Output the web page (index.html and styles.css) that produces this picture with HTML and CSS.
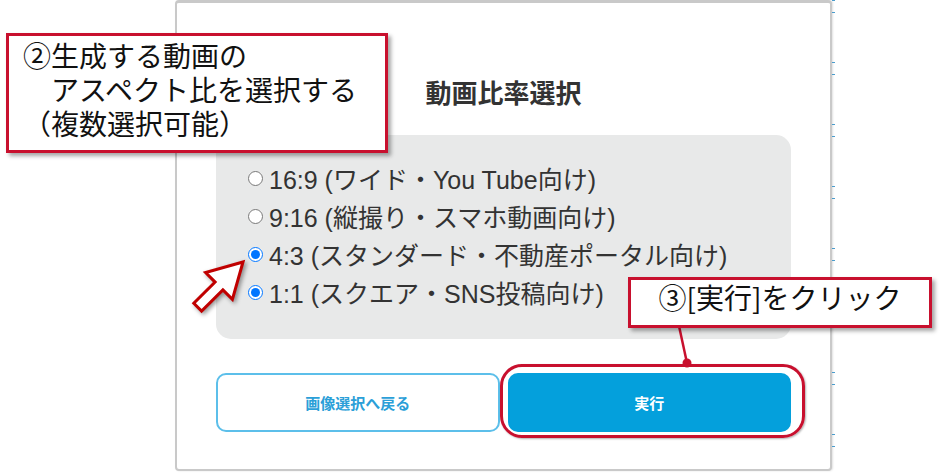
FILE: index.html
```html
<!DOCTYPE html>
<html>

<head>
    <title>動画比率選択</title>
    <link rel="stylesheet" href="styles.css">
</head>

<body>
    <div class="stage">
        <div class="modal">
            <h2 class="modal-title">動画比率選択</h2>
            <div class="ratio-box">
                <label class="ratio-item"><input type="radio" name="r169">16:9 (ワイド・You Tube向け)</label>
                <label class="ratio-item"><input type="radio" name="r916">9:16 (縦撮り・スマホ動画向け)</label>
                <label class="ratio-item"><input type="radio" name="r43" checked>4:3 (スタンダード・不動産ポータル向け)</label>
                <label class="ratio-item"><input type="radio" name="r11" checked>1:1 (スクエア・SNS投稿向け)</label>
            </div>
            <div class="modal-actions">
                <button class="btn btn-outline">画像選択へ戻る</button>
                <button class="btn btn-primary">実行</button>
            </div>
        </div>
        <div class="edge-ticks"></div>
    </div>

    <!-- annotations -->
    <div class="callout callout-select">
        <div class="callout-line">②生成する動画の</div>
        <div class="callout-line">　アスペクト比を選択する</div>
        <div class="callout-line">（複数選択可能）</div>
    </div>

    <svg class="pointer-arrow" width="75" height="75" viewBox="0 0 75 75">
        <polygon points="58,12 47.4,49.4 37.9,39.9 16.6,61.1 8.8,53.3 30.1,32.1 20.6,22.6"
            fill="#fff" stroke="#c00000" stroke-width="3" stroke-linejoin="miter" />
    </svg>

    <div class="click-ring"></div>
    <svg class="connector" width="30" height="50" viewBox="0 0 30 50">
        <line x1="9" y1="4" x2="17" y2="41" stroke="#c8102e" stroke-width="2.5" />
        <circle cx="17" cy="41" r="4.5" fill="#c8102e" />
    </svg>
    <div class="callout callout-run">③[実行]をクリック</div>
</body>

</html>
```

FILE: styles.css
```css
html,
body {
    margin: 0;
    padding: 0;
}

body {
    position: relative;
    width: 946px;
    height: 473px;
    overflow: hidden;
    background-color: #fff;
    font-family: "Liberation Sans", "Noto Sans CJK JP", sans-serif;
}

.stage {
    display: flex;
    align-items: flex-start;
    padding-left: 175px;
}

.modal {
    box-sizing: border-box;
    width: 657px;
    padding: 71px 39px 37px;
    border: 2px solid #c9c9c9;
    border-top-width: 3px;
    border-radius: 4px;
    background-color: #fff;
    box-shadow: 1px 0 2px rgba(0, 0, 0, 0.12);
}

.modal-title {
    margin: 0 0 25px;
    font-family: "Noto Sans CJK JP", sans-serif;
    font-size: 26px;
    font-weight: bold;
    line-height: 36px;
    text-align: center;
    color: #333;
}

.ratio-box {
    display: flex;
    flex-direction: column;
    padding: 24px 20px 28px 32px;
    border-radius: 15px;
    background-color: #e8e9e9;
}

.ratio-item {
    display: flex;
    align-items: center;
    gap: 6px;
    height: 38px;
    font-size: 25px;
    color: #333;
    white-space: nowrap;
}

.ratio-item input {
    width: 15px;
    height: 15px;
    margin: 0;
}

.modal-actions {
    display: grid;
    grid-template-columns: 1fr 1fr;
    gap: 8px;
    margin-top: 34px;
}

.btn {
    height: 59px;
    border-radius: 10px;
    font-family: "Noto Sans CJK JP", sans-serif;
    font-size: 15px;
    font-weight: bold;
}

.btn-outline {
    border: 2px solid #5cbfea;
    background-color: #fff;
    color: #2b9fd8;
}

.btn-primary {
    border: 2px solid #04a0dc;
    background-color: #04a0dc;
    color: #fff;
}

.edge-ticks {
    width: 3px;
    height: 473px;
    background: repeating-linear-gradient(to bottom,
            #4a9ccc 0, #4a9ccc 1px,
            transparent 1px, transparent 12px,
            #4a9ccc 12px, #4a9ccc 13px,
            transparent 13px, transparent 62px);
}

/* annotations over the screenshot */
.callout {
    position: absolute;
    box-sizing: border-box;
    border: 3px solid #c8102e;
    background-color: #fff;
    font-family: "Noto Sans CJK JP", sans-serif;
    font-size: 28px;
    line-height: 34px;
    color: #111;
    white-space: nowrap;
    box-shadow: 3px 3px 4px rgba(0, 0, 0, 0.35);
}

.callout-select {
    left: 6px;
    top: 33px;
    width: 382px;
    height: 120px;
    padding: 2px 14px;
}

.callout-line {
    height: 34px;
}

.callout-run {
    left: 628px;
    top: 277px;
    width: 304px;
    height: 51px;
    padding: 0;
    text-align: center;
}

.pointer-arrow {
    position: absolute;
    left: 185px;
    top: 250px;
    filter: drop-shadow(2px 2px 2px rgba(0, 0, 0, 0.4));
}

.click-ring {
    position: absolute;
    left: 500px;
    top: 364px;
    box-sizing: border-box;
    width: 305px;
    height: 74px;
    border: 3px solid #c8102e;
    border-radius: 22px;
    box-shadow: 1px 1px 2px rgba(0, 0, 0, 0.3);
}

.connector {
    position: absolute;
    left: 670px;
    top: 322px;
}
```
